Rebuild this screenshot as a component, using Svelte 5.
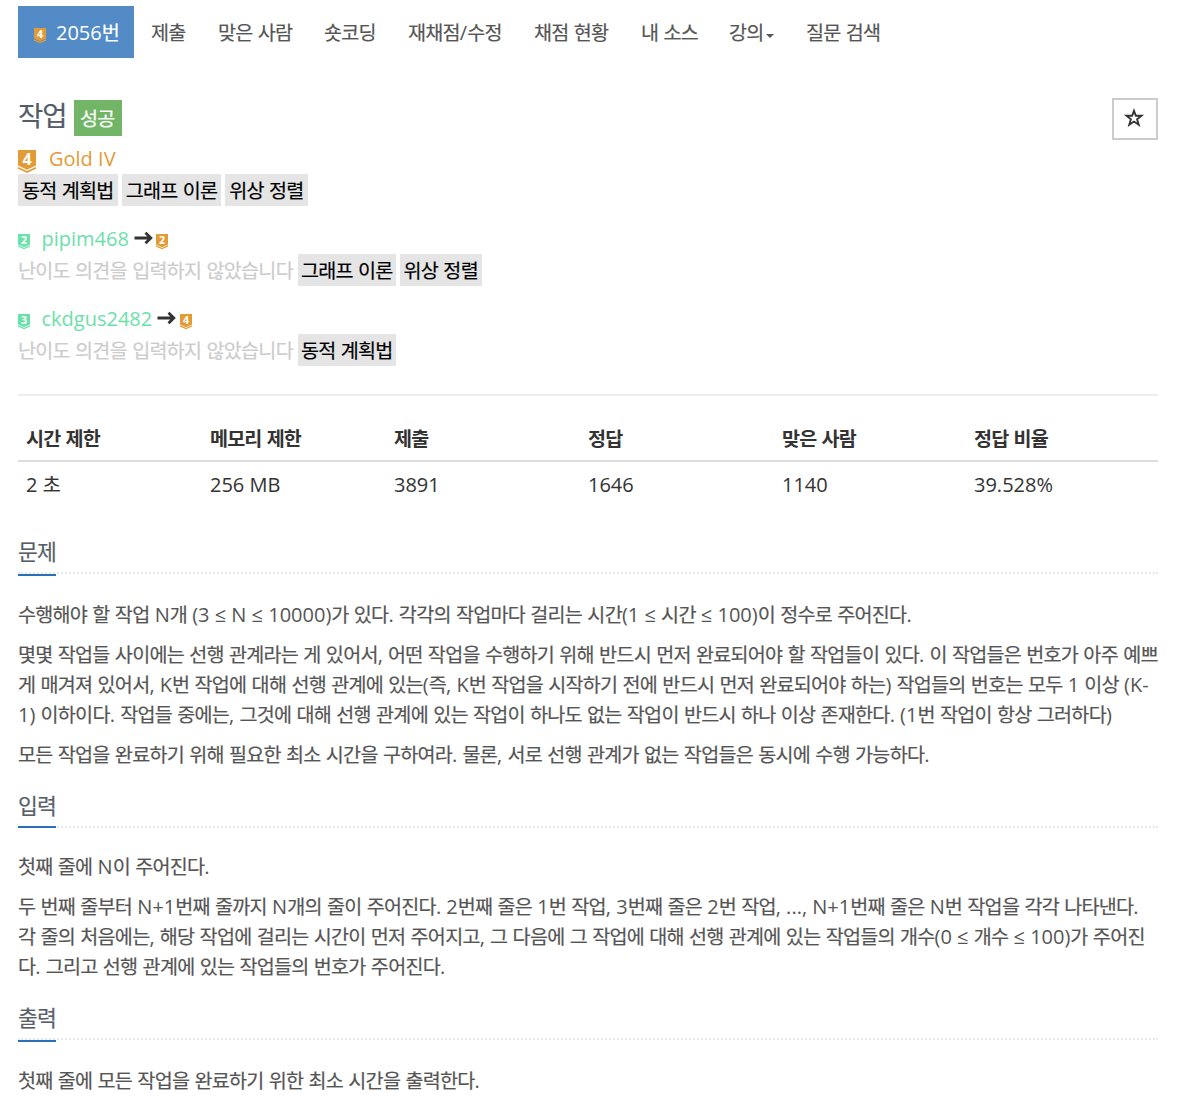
<script>
  const nav = [
    { t: '제출', w: 67 }, { t: '맞은 사람', w: 106 }, { t: '숏코딩', w: 84 },
    { t: '재채점/수정', w: 126 }, { t: '채점 현황', w: 107 }, { t: '내 소스', w: 88 },
    { t: '강의', w: 77, caret: true }, { t: '질문 검색', w: 110 }
  ];
  const votes = [
    { level: 2, name: 'pipim468', to: 2, tags: ['그래프 이론', '위상 정렬'] },
    { level: 3, name: 'ckdgus2482', to: 4, tags: ['동적 계획법'] }
  ];
  const limits = [
    ['시간 제한', '2 초'], ['메모리 제한', '256 MB'], ['제출', '3891'],
    ['정답', '1646'], ['맞은 사람', '1140'], ['정답 비율', '39.528%']
  ];
  const sections = [
    { title: '문제', paras: [
      ['수행해야 할 작업 N개 (3 ≤ N ≤ 10000)가 있다. 각각의 작업마다 걸리는 시간(1 ≤ 시간 ≤ 100)이 정수로 주어진다.'],
      ['몇몇 작업들 사이에는 선행 관계라는 게 있어서, 어떤 작업을 수행하기 위해 반드시 먼저 완료되어야 할 작업들이 있다. 이 작업들은 번호가 아주 예쁘',
       '게 매겨져 있어서, K번 작업에 대해 선행 관계에 있는(즉, K번 작업을 시작하기 전에 반드시 먼저 완료되어야 하는) 작업들의 번호는 모두 1 이상 (K-',
       '1) 이하이다. 작업들 중에는, 그것에 대해 선행 관계에 있는 작업이 하나도 없는 작업이 반드시 하나 이상 존재한다. (1번 작업이 항상 그러하다)'],
      ['모든 작업을 완료하기 위해 필요한 최소 시간을 구하여라. 물론, 서로 선행 관계가 없는 작업들은 동시에 수행 가능하다.']
    ] },
    { title: '입력', paras: [
      ['첫째 줄에 N이 주어진다.'],
      ['두 번째 줄부터 N+1번째 줄까지 N개의 줄이 주어진다. 2번째 줄은 1번 작업, 3번째 줄은 2번 작업, ..., N+1번째 줄은 N번 작업을 각각 나타낸다.',
       '각 줄의 처음에는, 해당 작업에 걸리는 시간이 먼저 주어지고, 그 다음에 그 작업에 대해 선행 관계에 있는 작업들의 개수(0 ≤ 개수 ≤ 100)가 주어진',
       '다. 그리고 선행 관계에 있는 작업들의 번호가 주어진다.']
    ] },
    { title: '출력', paras: [['첫째 줄에 모든 작업을 완료하기 위한 최소 시간을 출력한다.']] }
  ];
  // Hangul runs are tracked tighter than the Latin text around them.
  const runs = (s) => s.match(/[가-힣]+|[^가-힣]+/g).map((t) => ({ t, ko: /[가-힣]/.test(t) }));
</script>

{#snippet text(s)}<span class="text">{#each runs(s) as r}<span class:ko={r.ko}>{r.t}</span>{/each}</span>{/snippet}

{#snippet badge(n, kind, large = false)}
  <svg class="badge {kind}" class:large viewBox="0 0 18 23" aria-hidden="true">
    <path class="fill" d="M0 0H18V15.6L9 19.8L0 15.6Z" />
    <path class="line" d="M0 17.8L9 22L18 17.8" />
    <text x="9" y="15" text-anchor="middle">{n}</text>
  </svg>
{/snippet}

<div class="page">
  <nav>
    <a class="active">{@render badge(4, 'gold')}{@render text('2056번')}</a>
    {#each nav as item}
      <a style:width="{item.w}px">{@render text(item.t)}{#if item.caret}<i class="caret"></i>{/if}</a>
    {/each}
  </nav>

  <header>
    <h1>{@render text('작업')}</h1>
    <span class="success">{@render text('성공')}</span>
    <button aria-label="즐겨찾기">
      <svg width="22" height="22" viewBox="0 0 20 20"><path d="M10 3.4L11.7 8H16.8L12.8 11.2L14.3 16.2L10 13.2L5.7 16.2L7.2 11.2L3.2 8H8.3Z" /></svg>
    </button>
  </header>

  <div class="tier">{@render badge(4, 'gold', true)}{@render text('Gold IV')}</div>
  <div class="tags">
    {#each ['동적 계획법', '그래프 이론', '위상 정렬'] as t}<span class="tag">{@render text(t)}</span>{/each}
  </div>

  {#each votes as v}
    <div class="vote">
      <div class="who">
        {@render badge(v.level, 'platinum')}
        <span class="name">{@render text(v.name)}</span>
        <svg class="arrow" width="19" height="14" viewBox="0 0 19 14"><path d="M.5 7H16.5M11.5 1.8L16.8 7L11.5 12.2" /></svg>
        {@render badge(v.to, 'gold')}
      </div>
      <div class="tags">
        <span class="empty">{@render text('난이도 의견을 입력하지 않았습니다')}</span>
        {#each v.tags as t}<span class="tag">{@render text(t)}</span>{/each}
      </div>
    </div>
  {/each}

  <table>
    <thead><tr>{#each limits as l}<th>{@render text(l[0])}</th>{/each}</tr></thead>
    <tbody><tr>{#each limits as l}<td>{@render text(l[1])}</td>{/each}</tr></tbody>
  </table>

  {#each sections as s}
    <section>
      <div class="headline"><h2>{@render text(s.title)}</h2></div>
      {#each s.paras as p}
        <p>{#each p as line}<span class="row">{@render text(line)}</span>{/each}</p>
      {/each}
    </section>
  {/each}
</div>

<style>
  :global(body) { background: #fff; }
  .page {
    box-sizing: border-box; width: 1196px; height: 1118px; overflow: hidden;
    padding: 6px 38px 0 18px; color: #333;
    font: 20px/30px "Open Sans", "Noto Sans CJK KR", sans-serif;
  }
  .text { white-space: pre; }
  .ko {
    font-family: "Noto Sans CJK KR", sans-serif; font-size: 0.98em; line-height: 1;
    letter-spacing: -0.0378em; -webkit-text-stroke: 0.2px currentColor;
  }
  nav { display: flex; height: 52px; color: #555; }
  nav a { box-sizing: border-box; display: flex; align-items: center; padding: 2px 0 0 17px; }
  nav a.active { width: 116px; padding-left: 16px; gap: 10px; background: #528bc5; color: #fff; }
  .active .badge { margin-top: 5px; }
  .caret { margin: 6px 0 0 2px; border: 4px solid transparent; border-top-color: #555; border-bottom: 0; }

  .badge { display: block; width: 12px; height: 15.33px; flex: none; overflow: visible; }
  .badge.large { width: 18px; height: 23px; }
  .gold .fill { fill: #e39b36; }
  .gold .line { stroke: #e39b36; }
  .platinum .fill { fill: #6ce0aa; }
  .platinum .line { stroke: #6ce0aa; }
  .line { fill: none; stroke-width: 1.8; }
  .badge text { fill: #fff; font: 700 16px/1 "Open Sans", sans-serif; }

  header { display: flex; height: 46px; margin-top: 40px; }
  h1 { margin: 0; width: 56px; font-size: 28px; line-height: 34px; font-weight: 400; color: #555d6b; }
  .success { box-sizing: border-box; width: 48px; height: 36px; margin-top: 2px; padding-left: 6px; background: #72b566; color: #fff; line-height: 38px; }
  button { box-sizing: border-box; width: 46px; height: 42px; margin-left: auto; padding: 0; border: 2px solid #ccc; background: #fff; display: grid; place-items: center; }
  button svg { display: block; margin: 0 2px 2px 0; }
  button path { fill: none; stroke: #333; stroke-width: 1.7; stroke-miterlimit: 10; }

  .tier { display: flex; height: 30px; gap: 13px; align-items: center; color: #e39b36; line-height: 30px; }
  .tier .badge { margin-top: 5px; }
  .tags { display: flex; gap: 4px; height: 32px; line-height: 34px; }
  .tag { background: #e5e5e5; color: #000; padding: 0 4px; }
  .vote .tag { padding: 0 3px; }
  .vote .tag + .tag { padding: 0 4px; }
  .empty { color: #ccc; margin-right: 1px; }
  .vote { margin-top: 16px; }
  .who { box-sizing: border-box; display: flex; align-items: center; height: 32px; padding-top: 2px; }
  .who .badge { margin-top: 5px; }
  .name { margin: 0 5px 0 11.5px; color: #6ce0aa; }
  .arrow { margin: 0 3.4px 2px 0; fill: none; stroke: #333; stroke-width: 2.8; }

  table { width: 1140px; margin-top: 28px; border-top: 2px solid #eee; border-spacing: 0; table-layout: fixed; padding-top: 20px; }
  th, td { box-sizing: border-box; padding: 0 8px; text-align: left; }
  th { height: 46px; padding-top: 2px; border-bottom: 2px solid #ddd; font-weight: 700; }
  th .ko { -webkit-text-stroke: 0; letter-spacing: -0.045em; }
  td { height: 46px; }
  th:nth-child(1), th:nth-child(2) { width: 184px; }
  th:nth-child(3), th:nth-child(4) { width: 194px; }
  th:nth-child(5) { width: 192px; }

  section { color: #555; padding-top: 26px; }
  .headline { height: 38px; border-bottom: 2px dotted #e4e9f0; margin-bottom: 26px; }
  h2 { display: inline-block; box-sizing: border-box; height: 42px; margin: 0; border-bottom: 2px solid #2a70b8; color: #585f69; font-size: 22px; line-height: 34px; font-weight: 400; }
  section:nth-of-type(2) { padding-top: 8px; }
  section:nth-of-type(2) .headline { margin-bottom: 24px; }
  section:nth-of-type(2) h2 { height: 40px; }
  section:nth-of-type(3) { padding-top: 8px; }
  p { margin: 0 0 10px; }
  .row { display: block; height: 30px; }
</style>
